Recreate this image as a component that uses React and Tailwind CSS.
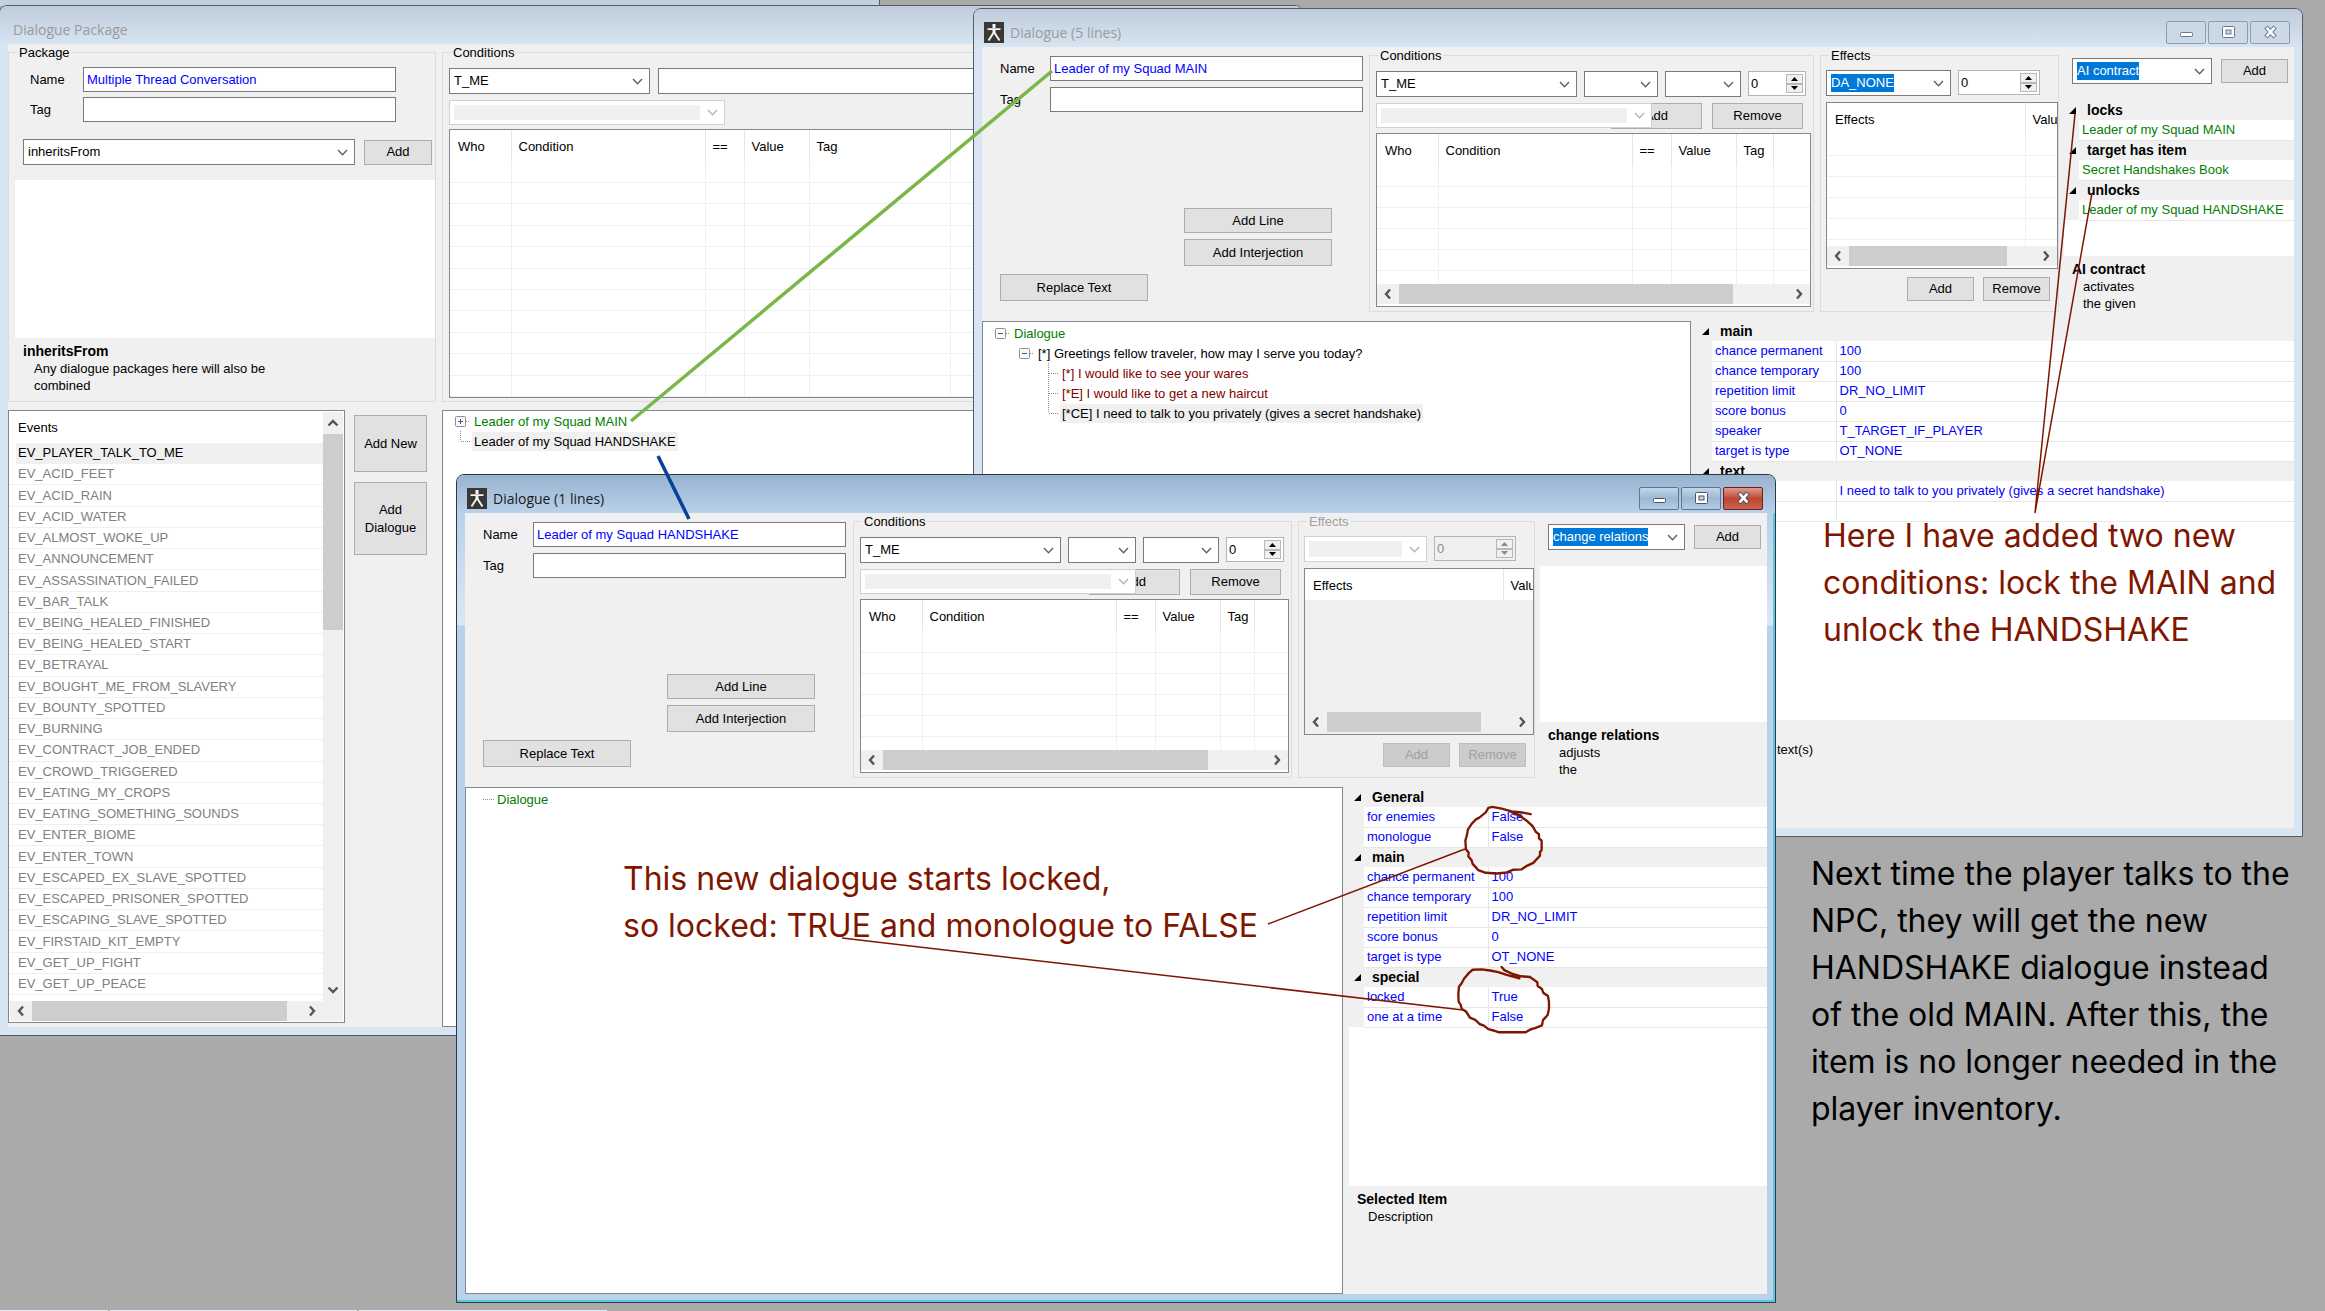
const events = [
    "EV_PLAYER_TALK_TO_ME",
    "EV_ACID_FEET",
    "EV_ACID_RAIN",
    "EV_ACID_WATER",
    "EV_ALMOST_WOKE_UP",
    "EV_ANNOUNCEMENT",
    "EV_ASSASSINATION_FAILED",
    "EV_BAR_TALK",
    "EV_BEING_HEALED_FINISHED",
    "EV_BEING_HEALED_START",
    "EV_BETRAYAL",
    "EV_BOUGHT_ME_FROM_SLAVERY",
    "EV_BOUNTY_SPOTTED",
    "EV_BURNING",
    "EV_CONTRACT_JOB_ENDED",
    "EV_CROWD_TRIGGERED",
    "EV_EATING_MY_CROPS",
    "EV_EATING_SOMETHING_SOUNDS",
    "EV_ENTER_BIOME",
    "EV_ENTER_TOWN",
    "EV_ESCAPED_EX_SLAVE_SPOTTED",
    "EV_ESCAPED_PRISONER_SPOTTED",
    "EV_ESCAPING_SLAVE_SPOTTED",
    "EV_FIRSTAID_KIT_EMPTY",
    "EV_GET_UP_FIGHT",
    "EV_GET_UP_PEACE",
];

const conditionColumns = [
    { label: "Who", width: "w-[61px]" },
    { label: "Condition", width: "w-[194px]" },
    { label: "==", width: "w-[39px]" },
    { label: "Value", width: "w-[65px]" },
    { label: "Tag", width: "w-[141px]" },
];

const effectColumns = [
    { label: "Effects", width: "w-[198px]" },
    { label: "Value", width: "w-[90px]" },
];

const contractRows = [
    { category: "locks" },
    { value: "Leader of my Squad MAIN" },
    { category: "target has item" },
    { value: "Secret Handshakes Book" },
    { category: "unlocks" },
    { value: "Leader of my Squad HANDSHAKE" },
];

const mainProps = [
    { category: "main" },
    { name: "chance permanent", value: "100" },
    { name: "chance temporary", value: "100" },
    { name: "repetition limit", value: "DR_NO_LIMIT" },
    { name: "score bonus", value: "0" },
    { name: "speaker", value: "T_TARGET_IF_PLAYER" },
    { name: "target is type", value: "OT_NONE" },
    { category: "text" },
    { name: "", value: "I need to talk to you privately (gives a secret handshake)" },
    { name: "", value: "" },
];

const handshakeProps = [
    { category: "General" },
    { name: "for enemies", value: "False" },
    { name: "monologue", value: "False" },
    { category: "main" },
    { name: "chance permanent", value: "100" },
    { name: "chance temporary", value: "100" },
    { name: "repetition limit", value: "DR_NO_LIMIT" },
    { name: "score bonus", value: "0" },
    { name: "target is type", value: "OT_NONE" },
    { category: "special" },
    { name: "locked", value: "True" },
    { name: "one at a time", value: "False" },
];

/* ---------- icons ---------- */

function AppIcon() {
    return (
        <svg width="20" height="21" viewBox="0 0 20 21" className="shrink-0">
            <rect width="20" height="21" fill="#3b3735" />
            <g fill="none" stroke="#f4f4f4">
                <path d="M10 2v4" strokeWidth="3" />
                <path d="M3.5 7.2h13" strokeWidth="1.8" />
                <path d="M10 7v5" strokeWidth="3" />
                <path d="M9.4 11L4.5 18.5M10.6 11L15.5 18.5" strokeWidth="2" />
            </g>
        </svg>
    );
}

function Chevron({ className }) {
    return (
        <svg width="11" height="7" viewBox="0 0 11 7" className={`pointer-events-none shrink-0 ${className}`}>
            <path d="M1 1l4.5 4.8L10 1" fill="none" stroke="currentColor" strokeWidth="1.4" />
        </svg>
    );
}

function ScrollArrow({ direction }) {
    const paths = {
        left: "M9 2.5L5 7l4 4.5",
        right: "M5 2.5L9 7l-4 4.5",
        up: "M2.5 9.5L7 5l4.5 4.5",
        down: "M2.5 4.5L7 9l4.5-4.5",
    };
    return (
        <svg width="14" height="14" viewBox="0 0 14 14">
            <path d={paths[direction]} fill="none" stroke="#555" strokeWidth="2.4" />
        </svg>
    );
}

/* Connector lines and the +/- box in front of a tree node */
function Twig({ kind }) {
    const dots = { stroke: "#8a8a8a", strokeWidth: 1, strokeDasharray: "1 1" };
    return (
        <svg width="20" height="20" viewBox="0 0 20 20" className="shrink-0">
            {kind === "dash" && <path d="M6 10.5h11" {...dots} />}
            {kind === "tee" && <path d="M6.5 0v20M7 10.5h10" {...dots} />}
            {kind === "corner" && <path d="M6.5 0v10M7 10.5h10" {...dots} />}
            {(kind === "plus" || kind === "minus") && (
                <>
                    <path d="M12 10.5h4" {...dots} />
                    <rect x="1.5" y="5.5" width="10" height="10" rx="1" fill="#fafafa" stroke="#8f8f8f" />
                    <path d={kind === "plus" ? "M4 10.5h5M6.5 8v5" : "M4 10.5h5"} stroke="#3a5a9a" fill="none" />
                </>
            )}
        </svg>
    );
}

/* ---------- controls ---------- */

function Button({ className, disabled, children }) {
    return (
        <button
            type="button"
            disabled={disabled}
            className={`shrink-0 border text-center leading-[18px] ${disabled ? "border-[#bfbfbf] bg-[#cccccc] text-[#a0a0a0]" : "border-[#adadad] bg-[#e1e1e1] text-black"} ${className}`}
        >
            {children}
        </button>
    );
}

function Combo({ label, value = "", className, disabled, highlighted }) {
    return (
        <div className={`relative flex items-center border bg-white ${disabled ? "border-[#d0d0d0] p-1" : "border-[#7a7a7a] pl-1"} ${className}`}>
            <select
                aria-label={label}
                disabled={disabled}
                className={`appearance-none leading-[18px] outline-none
                    ${highlighted ? "field-sizing-content bg-[#0078d7] text-white" : "h-full w-full"}
                    ${disabled ? "mr-5 bg-[#f0f0f0]" : ""}`}
            >
                <option>{value}</option>
            </select>
            <Chevron className={`absolute right-[6px] ${disabled ? "text-[#b5b5b5]" : "text-[#606060]"}`} />
        </div>
    );
}

function Spinner({ label, className, disabled }) {
    return (
        <div className={`flex border border-[#b4b4b4] p-[2px] ${disabled ? "bg-[#f0f0f0] text-[#8a8a8a]" : "bg-white text-black"} ${className}`}>
            <input aria-label={label} defaultValue="0" disabled={disabled} className="w-0 min-w-0 flex-1 bg-transparent outline-none" />
            <div className="flex w-[17px] flex-col">
                {["up", "down"].map((dir) => (
                    <button
                        key={dir}
                        type="button"
                        disabled={disabled}
                        aria-label={`${label} ${dir}`}
                        className="flex flex-1 items-center justify-center border border-[#b8b8b8] bg-[#f0f0f0]"
                    >
                        <svg width="7" height="4" viewBox="0 0 7 4">
                            <path d={dir === "up" ? "M0 4L3.5 0L7 4z" : "M0 0L3.5 4L7 0z"} fill="currentColor" />
                        </svg>
                    </button>
                ))}
            </div>
        </div>
    );
}

function Field({ id, label, value, labelWidth = "w-[50px]" }) {
    return (
        <div className="flex items-center">
            <label htmlFor={id} className={labelWidth}>
                {label}
            </label>
            <input id={id} defaultValue={value} className="h-[25px] w-[313px] border border-[#7a7a7a] bg-white px-[3px] text-[#0000ff] outline-none" />
        </div>
    );
}

function Group({ title, className, inner, muted, children }) {
    return (
        <fieldset className={`min-w-0 border border-[#dcdcdc] ${className}`}>
            <legend className={`ml-2 px-[2px] leading-[17px] ${muted ? "text-[#a0a0a0]" : ""}`}>{title}</legend>
            <div className={inner}>{children}</div>
        </fieldset>
    );
}

function HScroll({ thumb, className }) {
    return (
        <div className={`flex h-5 shrink-0 items-stretch bg-[#f0f0f0] ${className}`}>
            <button type="button" aria-label="Scroll left" className="flex w-[22px] items-center justify-center">
                <ScrollArrow direction="left" />
            </button>
            <div className="flex flex-1">
                <div className={`bg-[#cdcdcd] ${thumb}`} />
            </div>
            <button type="button" aria-label="Scroll right" className="flex w-[22px] items-center justify-center">
                <ScrollArrow direction="right" />
            </button>
        </div>
    );
}

function ListView({ columns, rows, thumb, className, muted }) {
    return (
        <div className={`flex flex-col overflow-hidden border border-[#828790] ${muted ? "bg-[#f0f0f0]" : "bg-white"} ${className}`}>
            <div className="min-h-0 flex-1 overflow-hidden">
                <table className={`w-full table-fixed border-collapse ${muted ? "" : "h-full"}`}>
                    <thead>
                        <tr className="h-[31px] bg-white">
                            {columns.map((col) => (
                                <th
                                    key={col.label}
                                    className={`overflow-hidden border-r border-[#e5e5e5] pt-[2px] pl-[7px] text-left font-normal whitespace-nowrap first:pl-2 last:border-r-0 ${col.width}`}
                                >
                                    {col.label}
                                </th>
                            ))}
                            <th />
                        </tr>
                    </thead>
                    <tbody>
                        {Array.from({ length: rows }, (_, i) => (
                            <tr key={i} className="h-[21px]">
                                {columns.map((col) => (
                                    <td key={col.label} className="border-r border-b border-[#f0f0f0]" />
                                ))}
                                <td className="border-b border-[#f0f0f0]" />
                            </tr>
                        ))}
                    </tbody>
                </table>
            </div>
            {thumb && <HScroll thumb={thumb} className="mb-[2px]" />}
        </div>
    );
}

function PropertyGrid({ rows, color, className }) {
    return (
        <div className={`overflow-hidden bg-white ${className}`}>
            <table className="w-full border-collapse whitespace-nowrap">
                <tbody>
                    {rows.map((row, i) =>
                        row.category ? (
                            <tr key={i} className="h-5 bg-[#f0f0f0]">
                                <td className="w-[15px]">
                                    <svg width="7" height="7" viewBox="0 0 7 7" className="ml-[5px]">
                                        <path d="M7 0v7H0z" fill="#000" />
                                    </svg>
                                </td>
                                <th colSpan={2} className="pl-2 text-left text-[14px] leading-[18px] font-bold">
                                    {row.category}
                                </th>
                            </tr>
                        ) : (
                            <tr key={i} className={`h-5 ${color}`}>
                                <td className="w-[15px] bg-[#f0f0f0]" />
                                {row.name !== undefined && <td className="w-[124px] border-r border-b border-[#e6e6e6] pl-[3px] leading-[18px]">{row.name}</td>}
                                <td colSpan={row.name === undefined ? 2 : 1} className="border-b border-[#e6e6e6] pl-[3px] leading-[18px]">
                                    {row.value}
                                </td>
                            </tr>
                        )
                    )}
                </tbody>
            </table>
        </div>
    );
}

/* ---------- windows ---------- */

function CaptionButtons({ active }) {
    const base = `flex h-[23px] w-10 items-center justify-center rounded-[2px] border ${active ? "border-[#5f7690] bg-linear-to-b from-[#c3d6ea] via-[#9db8d4] to-[#b4cde6]" : "border-[#8d9db0] bg-[#cbd9e7]"}`;
    const ink = active ? "#4a5464" : "#6b7686";
    return (
        <div className="ml-auto flex gap-[2px] pr-1">
            <button type="button" aria-label="Minimize" className={base}>
                <svg width="15" height="14" viewBox="0 0 15 14">
                    <rect x="1.5" y="7.5" width="12" height="4" rx="1" fill="#fff" stroke={ink} />
                </svg>
            </button>
            <button type="button" aria-label="Maximize" className={base}>
                <svg width="15" height="14" viewBox="0 0 15 14">
                    <rect x="1.5" y="1.5" width="12" height="11" rx="1" fill="#fff" stroke={ink} />
                    <rect x="5" y="5" width="5" height="4" fill="#c3d6ea" stroke={ink} />
                </svg>
            </button>
            <button
                type="button"
                aria-label="Close"
                className={active ? "flex h-[23px] w-10 items-center justify-center rounded-[2px] border border-[#6b1f1a] bg-linear-to-b from-[#dd9a8c] via-[#bf4632] to-[#c8634e]" : base}
            >
                <svg width="15" height="14" viewBox="0 0 15 14">
                    <path d="M3 2l9 10M12 2L3 12" stroke={ink} strokeWidth="4.6" />
                    <path d="M3.6 2.6l7.8 8.8M11.4 2.6L3.6 11.4" stroke="#fff" strokeWidth="2.6" />
                </svg>
            </button>
        </div>
    );
}

function Window({ title, icon, active, className, children }) {
    return (
        <section
            className={`absolute flex flex-col overflow-hidden rounded-t-lg border px-2 pb-2
                ${
                    active
                        ? "border-[#2c3a44] bg-[linear-gradient(#b9d1ea_40px,#dbe7f4_150px,#b9d1ea_151px)] shadow-[inset_-2px_-2px_0_#5cc8dc]"
                        : "border-[#555b62] bg-[#d7e4f2]"
                } ${className}`}
        >
            <header
                className={`-mx-2 flex h-[38px] shrink-0 items-center gap-[6px] px-2 pt-2 font-['Open_Sans',sans-serif] text-[14px]
                    ${active ? "bg-linear-to-b from-[#98b3d0] to-[#b9d1ea] text-[#1a1a1a]" : "bg-linear-to-b from-[#bfcddb] to-[#d7e4f2] text-[#9a9a9a]"}`}
            >
                {icon && (
                    <span className="pl-[2px]">
                        <AppIcon />
                    </span>
                )}
                <h2 className={icon ? "" : "pl-[5px]"}>{title}</h2>
                {icon && <CaptionButtons active={active} />}
            </header>
            <div className="flex min-h-0 flex-1 flex-col bg-[#f0f0f0]">{children}</div>
        </section>
    );
}

function DialogueEditor({ id, name, columns, conditionThumb, effectThumb, effectsDisabled, relation, help, contracts, tree, treeWidth, props, description }) {
    return (
        <>
            <div className={`grid h-[274px] shrink-0 ${columns}`}>
                <div className="flex flex-col items-start pt-[9px] pl-[18px]">
                    <Field id={`${id}-name`} label="Name" value={name} />
                    <div className="mt-[6px]">
                        <Field id={`${id}-tag`} label="Tag" value="" />
                    </div>
                    <Button className="mt-[96px] ml-[184px] h-[25px] w-[148px]">Add Line</Button>
                    <Button className="mt-[6px] ml-[184px] h-[27px] w-[148px]">Add Interjection</Button>
                    <Button className="mt-2 h-[27px] w-[148px]">Replace Text</Button>
                </div>

                <Group title="Conditions" className="mb-[9px]" inner="pr-[2px] pl-[6px]">
                    <div className="mt-[7px] mr-[5px] flex gap-[7px]">
                        <Combo label="Who" value="T_ME" className="h-[26px] w-[201px]" />
                        <Combo label="Condition" className="h-[26px] flex-1" />
                        <Combo label="Comparison" className="h-[26px] w-[76px]" />
                        <Spinner label="Amount" className="h-[25px] w-[58px]" />
                    </div>
                    <div className="relative mt-[6px] mr-2 flex justify-end gap-[10px]">
                        <Button className="h-[26px] w-[91px]">Add</Button>
                        <Button className="h-[26px] w-[91px]">Remove</Button>
                        {/* the tag combo overlaps the Add button */}
                        <Combo label="Condition tag" disabled className="absolute! top-0 left-0 h-[25px] w-[276px]" />
                    </div>
                    <ListView columns={conditionColumns.slice(0, 4).concat({ label: "Tag", width: "" })} rows={6} thumb={conditionThumb} className="mt-1 h-[174px]" />
                </Group>

                <Group title="Effects" muted={effectsDisabled} className="mb-[9px]" inner="pl-[5px]">
                    <div className="mt-[6px] mr-[18px] flex gap-[7px]">
                        <Combo label="Effect" value={effectsDisabled ? "" : "DA_NONE"} disabled={effectsDisabled} highlighted={!effectsDisabled} className="h-[26px] flex-1" />
                        <Spinner label="Effect value" disabled={effectsDisabled} className="h-[25px] w-[82px]" />
                    </div>
                    <ListView columns={effectColumns} rows={effectsDisabled ? 0 : 6} muted={effectsDisabled} thumb={effectThumb} className="mt-[6px] h-[167px]" />
                    <div className="mt-2 mr-2 flex justify-end gap-[9px]">
                        <Button disabled={effectsDisabled} className="h-6 w-[67px]">
                            Add
                        </Button>
                        <Button disabled={effectsDisabled} className="h-6 w-[67px]">
                            Remove
                        </Button>
                    </div>
                </Group>

                <div className="flex flex-col">
                    <div className="mt-[11px] mr-[6px] ml-2 flex items-center gap-[9px]">
                        <Combo label="Relation" value={relation} highlighted className="h-[26px] flex-1" />
                        <Button className="h-6 w-[67px]">Add</Button>
                    </div>
                    <PropertyGrid rows={contracts} color="text-[#008000]" className="mt-4 h-[156px]" />
                    <h3 className="mt-[5px] pl-2 text-[14px] leading-[17px] font-bold">{relation}</h3>
                    <p className="pl-[19px] leading-[17px] whitespace-pre-line">{help}</p>
                </div>
            </div>

            <div className="flex min-h-0 flex-1">
                <div className={`mr-[6px] shrink-0 border border-[#828790] bg-white pt-px ${treeWidth}`}>{tree}</div>
                <div className="flex min-w-0 flex-1 flex-col">
                    <PropertyGrid rows={props} color="text-[#0000ff]" className="h-[399px] shrink-0" />
                    {description}
                </div>
            </div>
        </>
    );
}

function TreeNode({ kind, className, color = "text-black", selected, children }) {
    return (
        <li className={`flex h-5 items-center ${className}`}>
            <Twig kind={kind} />
            <span className={`-ml-[2px] px-[2px] leading-[19px] ${color} ${selected ? "bg-[#f0f0f0]" : ""}`}>{children}</span>
        </li>
    );
}

function PackageWindow() {
    return (
        <Window title="Dialogue Package" className="top-[5px] -left-px h-[1031px] w-[1304px]">
            <div className="flex h-[358px] shrink-0 gap-[6px]">
                <Group title="Package" className="w-[428px] shrink-0">
                    <div className="mt-[6px] ml-[21px] flex flex-col gap-[5px]">
                        <Field id="package-name" label="Name" value="Multiple Thread Conversation" labelWidth="w-[53px]" />
                        <Field id="package-tag" label="Tag" value="" labelWidth="w-[53px]" />
                    </div>
                    <div className="mt-[17px] ml-[14px] flex items-center gap-[9px]">
                        <Combo label="Inheritance" value="inheritsFrom" className="h-[26px] w-[332px]" />
                        <Button className="h-[25px] w-[68px]">Add</Button>
                    </div>
                    <div className="mt-[15px] ml-[6px] h-[158px] bg-white" />
                    <h3 className="mt-[5px] pl-[14px] text-[14px] leading-[17px] font-bold">inheritsFrom</h3>
                    <p className="w-[270px] pl-[25px] leading-[17px]">Any dialogue packages here will also be combined</p>
                </Group>
                <Group title="Conditions" className="flex-1" inner="pl-[6px]">
                    <div className="mt-[7px] flex gap-2">
                        <Combo label="Who" value="T_ME" className="h-[26px] w-[201px]" />
                        <Combo label="Condition" className="h-[26px] flex-1" />
                    </div>
                    <Combo label="Condition tag" disabled className="mt-[6px] h-[25px] w-[276px]" />
                    <ListView columns={conditionColumns} rows={11} className="mt-1 h-[269px]" />
                </Group>
            </div>

            <div className="mt-2 flex min-h-0 flex-1">
                <div className="mb-[4px] flex w-[337px] flex-col border border-[#828790] bg-white p-px">
                    <div className="flex min-h-0 flex-1">
                        <div className="flex flex-1 flex-col">
                            <h3 className="h-[31px] pt-[7px] pl-2 leading-[18px]">Events</h3>
                            <ul className="mb-[6px] flex flex-1 flex-col">
                                {events.map((name, i) => (
                                    <li
                                        key={name}
                                        className={`flex flex-1 items-center border-b border-[#f0f0f0] leading-[18px] ${i === 0 ? "ml-[6px] bg-[#f0f0f0] pl-[2px] text-black" : "pl-2 text-[#808080]"}`}
                                    >
                                        {name}
                                    </li>
                                ))}
                            </ul>
                        </div>
                        <div className="flex w-5 flex-col items-center bg-[#f0f0f0]">
                            <button type="button" aria-label="Scroll up" className="flex h-[22px] items-center">
                                <ScrollArrow direction="up" />
                            </button>
                            <div className="h-[196px] w-full bg-[#cdcdcd]" />
                            <button type="button" aria-label="Scroll down" className="mt-auto flex h-[22px] items-center">
                                <ScrollArrow direction="down" />
                            </button>
                        </div>
                    </div>
                    <HScroll thumb="w-[255px]" className="pr-5" />
                </div>
                <div className="mt-[5px] ml-[9px] flex w-[73px] flex-col gap-[10px]">
                    <Button className="h-[57px]">Add New</Button>
                    <Button className="h-[73px]">Add Dialogue</Button>
                </div>
                <ul className="ml-[15px] flex-1 border border-[#828790] bg-white">
                    <TreeNode kind="plus" color="text-[#008000]" className="pl-[11px]">
                        Leader of my Squad MAIN
                    </TreeNode>
                    <TreeNode kind="corner" className="pl-[11px]" selected>
                        Leader of my Squad HANDSHAKE
                    </TreeNode>
                </ul>
            </div>
        </Window>
    );
}

function MainDialogueWindow() {
    return (
        <Window title="Dialogue (5 lines)" icon className="top-2 left-[973px] h-[829px] w-[1330px]">
            <DialogueEditor
                id="main"
                name="Leader of my Squad MAIN"
                columns="grid-cols-[387px_445px_239px_1fr] [&>*:nth-child(3)]:ml-[6px] [&>*:nth-child(3)]:-mr-[6px] [&>*:nth-child(4)]:ml-[11px]"
                conditionThumb="w-[334px]"
                effectThumb="w-[158px]"
                relation="AI contract"
                help={"activates\nthe given"}
                contracts={contractRows}
                treeWidth="w-[709px]"
                props={mainProps}
                description={<p className="mt-[21px] pl-[80px] leading-[17px]">text(s)</p>}
                tree={
                    <ul>
                        <TreeNode kind="minus" color="text-[#008000]" className="pl-[11px]">
                            Dialogue
                        </TreeNode>
                        <TreeNode kind="minus" className="pl-[35px]">
                            [*] Greetings fellow traveler, how may I serve you today?
                        </TreeNode>
                        <TreeNode kind="tee" color="text-[#800000]" className="pl-[59px]">
                            [*] I would like to see your wares
                        </TreeNode>
                        <TreeNode kind="tee" color="text-[#800000]" className="pl-[59px]">
                            [*E] I would like to get a new haircut
                        </TreeNode>
                        <TreeNode kind="corner" className="pl-[59px]" selected>
                            [*CE] I need to talk to you privately (gives a secret handshake)
                        </TreeNode>
                    </ul>
                }
            />
        </Window>
    );
}

function HandshakeDialogueWindow() {
    return (
        <Window title="Dialogue (1 lines)" icon active className="top-[474px] left-[456px] h-[829px] w-[1320px]">
            <DialogueEditor
                id="handshake"
                name="Leader of my Squad HANDSHAKE"
                columns="grid-cols-[388px_439px_237px_1fr] [&>*:nth-child(3)]:ml-[6px] [&>*:nth-child(3)]:-mr-[6px] [&>*:nth-child(4)]:ml-[11px]"
                conditionThumb="w-[325px]"
                effectThumb="w-[154px]"
                effectsDisabled
                relation="change relations"
                help={"adjusts\nthe"}
                contracts={[]}
                treeWidth="w-[878px]"
                props={handshakeProps}
                description={
                    <>
                        <h3 className="mt-[5px] pl-2 text-[14px] leading-[17px] font-bold">Selected Item</h3>
                        <p className="pl-[19px] leading-[17px]">Description</p>
                    </>
                }
                tree={
                    <ul>
                        <TreeNode kind="dash" color="text-[#008000]" className="pl-[11px]">
                            Dialogue
                        </TreeNode>
                    </ul>
                }
            />
        </Window>
    );
}

/* Arrows and hand-drawn circles over the windows */
function Markup() {
    return (
        <svg className="pointer-events-none absolute inset-0 h-full w-full" fill="none">
            <path d="M631 421L1052 71" stroke="#7ab648" strokeWidth="3.5" />
            <path d="M658 456L689 519" stroke="#07429a" strokeWidth="3.5" />
            <g stroke="#7f1700" strokeWidth="1.5">
                <path d="M2075 114L2035 513L2092 193" />
                <path d="M1268 924L1465 849" />
                <path d="M842 938L1463 1010" />
            </g>
            <g stroke="#7f1700" strokeWidth="7" strokeLinejoin="round" strokeLinecap="round" transform="translate(1320 770) scale(.3333 .345)">
                <path d="M632 128L605 123L575 120L545 112L517 107L505 110L498 122L478 138L468 143L455 156L444 172L441 188L436 205L438 230L446 240L445 250L455 262L458 272L475 290L497 298L530 300L560 297L580 289L605 288L622 277L640 269L660 248L660 238L665 232L665 205L657 198L657 186L648 180L638 163L620 147L600 133L570 120" />
                <path d="M545 571L553 580L575 590L598 604L560 594L535 586L510 581L485 578L458 579L447 588L432 605L425 618L417 628L415 650L416 672L422 680L425 692L438 700L450 718L466 724L480 737L492 741L505 751L520 755L535 760L617 760L632 752L645 748L666 740L669 725L683 710L687 692L687 672L684 655L670 646L666 635L653 626L652 615L630 600L603 598L575 590" />
            </g>
        </svg>
    );
}

export default function App() {
    return (
        <main className="relative min-h-screen w-full overflow-hidden bg-[#aaaaaa] font-['Liberation_Sans',sans-serif] text-[13px] text-black">
            {/* edges of the windows lying further back */}
            <div className="absolute top-0 left-0 h-[6px] w-[880px] border-r border-[#555b62] bg-[#c3d1df]" />
            <div className="absolute bottom-0 left-0 flex h-px w-[607px] gap-[2px]">
                <div className="w-[108px] bg-[#dfe9f3]" />
                <div className="w-[247px] bg-[#dfe9f3]" />
                <div className="flex-1 bg-[#dfe9f3]" />
            </div>

            <PackageWindow />
            <MainDialogueWindow />
            <HandshakeDialogueWindow />

            <div className="font-[Inter,sans-serif] text-[32px] leading-[47px] whitespace-nowrap">
                <p className="absolute top-[855px] left-[623px] text-[#7f1700]">
                    This new dialogue starts locked,
                    <br />
                    so locked: TRUE and monologue to FALSE
                </p>
                <p className="absolute top-[512px] left-[1823px] text-[#7f1700]">
                    Here I have added two new
                    <br />
                    conditions: lock the MAIN and
                    <br />
                    unlock the HANDSHAKE
                </p>
                <p className="absolute top-[850px] left-[1811px]">
                    Next time the player talks to the
                    <br />
                    NPC, they will get the new
                    <br />
                    HANDSHAKE dialogue instead
                    <br />
                    of the old MAIN. After this, the
                    <br />
                    item is no longer needed in the
                    <br />
                    player inventory.
                </p>
            </div>

            <Markup />
        </main>
    );
}
